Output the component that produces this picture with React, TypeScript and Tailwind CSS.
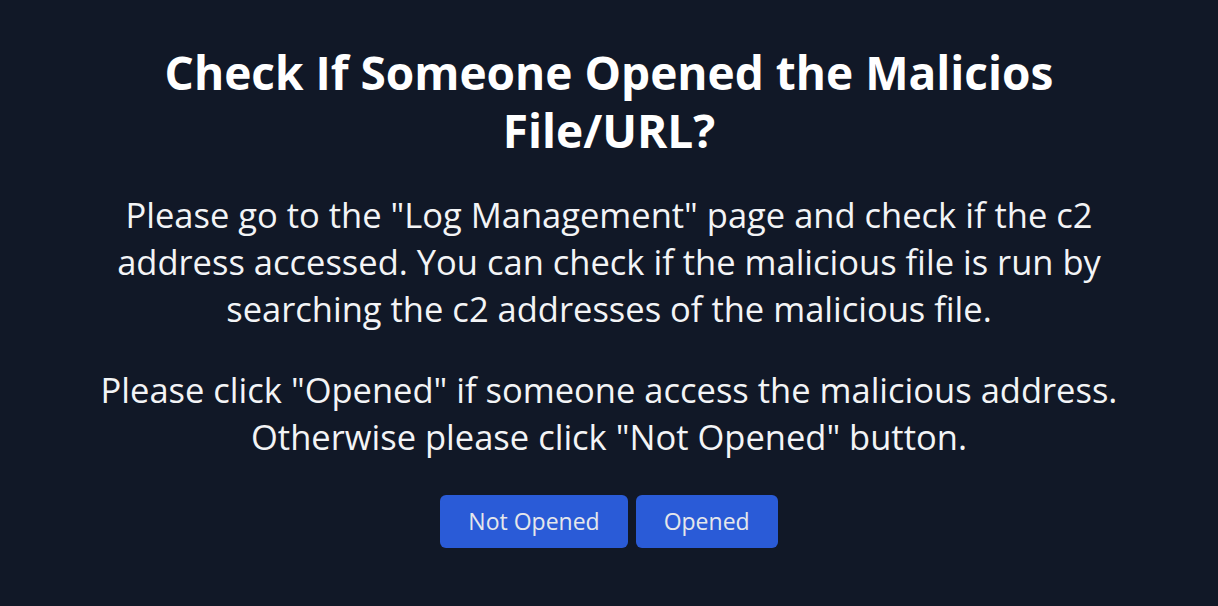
const App = () => {
  return (
    <div
      className="w-full h-[606px] bg-[#111827] flex flex-col items-center text-white"
      style={{ fontFamily: '"Open Sans", "Noto Sans", sans-serif' }}
    >
      <div className="w-[1040px] pt-[43px] flex flex-col items-center text-center">
        <h1 className="text-[46px] font-bold leading-[58px]">
          Check If Someone Opened the Malicios File/URL?
        </h1>
        <p className="mt-[32px] text-[34.5px] leading-[47px] text-[#f3f4f6]">
          Please go to the "Log Management" page and check if the c2 address
          accessed. You can check if the malicious file is run by searching the
          c2 addresses of the malicious file.
        </p>
        <p className="mt-[34px] text-[34.5px] leading-[47px] text-[#f3f4f6]">
          Please click "Opened" if someone access the malicious address.
          Otherwise please click "Not Opened" button.
        </p>
        <div className="mt-[35px] flex gap-2">
          <button className="h-[53px] px-[28px] rounded-md bg-[#2a5bd7] text-[23px] text-[#e5e7eb]">
            Not Opened
          </button>
          <button className="h-[53px] px-[28px] rounded-md bg-[#2a5bd7] text-[23px] text-[#e5e7eb]">
            Opened
          </button>
        </div>
      </div>
    </div>
  );
};

export default App;
